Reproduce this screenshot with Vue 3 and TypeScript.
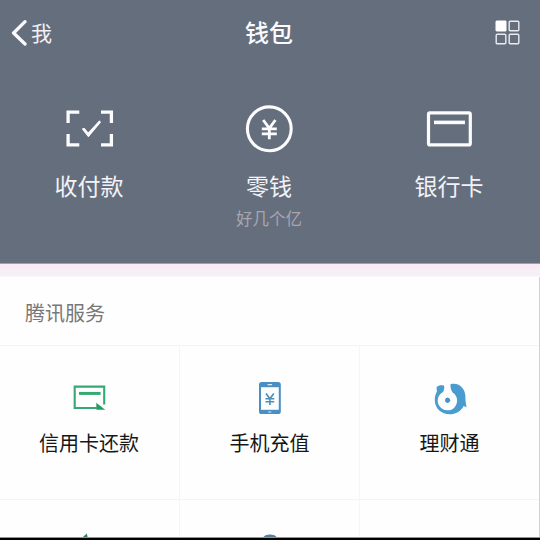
<script setup lang="ts">
interface Entry {
  id: string
  label: string
  note?: string
}

const actions: Entry[] = [
  { id: 'pay', label: '收付款' },
  { id: 'change', label: '零钱', note: '好几个亿' },
  { id: 'cards', label: '银行卡' },
]

const services: Entry[] = [
  { id: 'repay', label: '信用卡还款' },
  { id: 'topup', label: '手机充值' },
  { id: 'wealth', label: '理财通' },
]
</script>

<template>
  <main class="wallet">
    <section class="hero">
      <header class="nav">
        <div class="back">
          <svg width="16" height="28" viewBox="0 0 16 28" fill="none" stroke="#fafaff" stroke-width="3.3" stroke-linecap="round" stroke-linejoin="round">
            <path d="M14 2.7 2.6 14l11.4 11" />
          </svg>
          <span>我</span>
        </div>
        <h1>钱包</h1>
        <div class="menu">
          <svg width="26" height="26" viewBox="0 0 26 26" fill="none" stroke="#e9ebf0" stroke-width="1.4">
            <rect x="1.2" y="1.2" width="9.6" height="9.6" rx=".6" fill="#fff" stroke="#fff" />
            <rect x="14.2" y="1.2" width="9.6" height="9.6" rx="1" />
            <rect x="1.2" y="14.2" width="9.6" height="9.6" rx="1" />
            <rect x="14.2" y="14.2" width="9.6" height="9.6" rx="1" />
          </svg>
        </div>
      </header>
      <div class="actions">
        <div v-for="a in actions" :key="a.id" class="action">
          <svg width="50" height="50" viewBox="0 0 50 50" fill="none" stroke="#fcfcff">
            <template v-if="a.id === 'pay'">
              <path d="M4.1 19V8.2h11.2M37 8.2h10.4V19M4.1 30v10.8h11.2M37 40.8h10.4V30" stroke-width="3.3" />
              <path d="M18.5 25l1.6-.5 4.1 4.8L35.4 17.2l.9 1L24.4 32.4z" fill="#fcfcff" stroke-width="1.2" stroke-linejoin="round" />
            </template>
            <template v-else-if="a.id === 'change'">
              <circle cx="25.3" cy="24.8" r="21.9" stroke-width="3.1" />
              <path d="M19.2 16l6.1 8.4 6.1-8.4M25.3 24.3v10.9M17.8 24.8h15M17.8 29.8h15" stroke-width="2.8" />
            </template>
            <template v-else>
              <rect x="4.5" y="8.8" width="41.8" height="32.1" rx="1.5" stroke-width="3.2" />
              <path d="M10 18.4h31" stroke-width="3.6" />
            </template>
          </svg>
          <span class="action-label">{{ a.label }}</span>
          <span v-if="a.note" class="note">{{ a.note }}</span>
        </div>
      </div>
    </section>
    <div class="divider"></div>
    <section class="services">
      <h2>腾讯服务</h2>
      <div class="grid">
        <div v-for="s in services" :key="s.id" class="cell">
          <svg width="36" height="36" viewBox="0 0 36 36" fill="none">
            <template v-if="s.id === 'repay'">
              <path d="M32.2 24.5V6.6H2.7v21.4h22" stroke="#35a873" stroke-width="2.1" />
              <path d="M7 13.4h21.6" stroke="#35a873" stroke-width="3" />
              <path d="M24.3 22.8l8.9 7h-8.9z" fill="#269b64" />
            </template>
            <template v-else-if="s.id === 'topup'">
              <rect x="7" y="2" width="21.8" height="32" rx="2.6" fill="#498fc3" />
              <rect x="9" y="7.2" width="17.8" height="22.6" fill="#fbfdff" />
              <path d="M15.6 4.6h4.5M16.3 32h3" stroke="#dcecf7" stroke-width="1.2" />
              <path d="M14 13.5l3.9 5.3 3.9-5.3M17.9 18.3v6.8M13.5 18.8h8.8M13.5 21.8h8.8" stroke="#4f8eb6" stroke-width="1.6" />
            </template>
            <template v-else>
              <path d="M4.6 7.2C6.5 5.4 9 4.8 12 5.6c.6 2.4.2 4.4-1 6.4A9.7 9.7 0 1 0 20.6 12.4C18.9 10 18.4 7 18.5 4.2c2.5-.8 5.5-.6 7.5.4 5 2.4 7.6 7.4 7.4 12.9-.1 2.5.4 5.5 1.2 9.8L31.6 26C29 31.5 23.5 34.3 17.8 34.3 9.5 34.3 3 28.5 2.8 20.5 2.7 17 3.4 14 5 11.5 4.6 10 4.6 8.5 4.6 7.2z" fill="#499cd0" />
              <path d="M13 19.8l1-1.8 1.9-.4 1.9 1.1.5 1.9-1.2 1.8-2 .5-1.8-1.2z" fill="#4593c8" />
            </template>
          </svg>
          <span>{{ s.label }}</span>
        </div>
      </div>
      <div class="grid next">
        <div class="cell clipped">
          <svg width="36" height="4" viewBox="0 0 36 4"><path d="M11 4l3.8-3.6.8 3.6z" fill="#377c64" /></svg>
        </div>
        <div class="cell clipped">
          <svg width="36" height="4" viewBox="0 0 36 4"><path d="M11.5 4c2.7-3.2 10.3-3.2 13 0z" fill="#4f8399" /></svg>
        </div>
        <div class="cell clipped"></div>
      </div>
    </section>
    <div class="bottom"></div>
  </main>
</template>

<style scoped>
.wallet {
  display: flex;
  flex-direction: column;
  width: 540px;
  height: 540px;
  overflow: hidden;
  background: #fefefe;
  font-family: "Noto Sans CJK SC", sans-serif;
}
svg { display: block; flex: none; }
h1, h2 { margin: 0; }
.hero {
  height: 264px;
  flex: none;
  background: #656e7c;
  border-bottom: 1px solid #a39ca9;
  box-sizing: border-box;
}
.nav {
  display: grid;
  grid-template-columns: 1fr 180px 1fr;
  align-items: center;
  height: 65px;
}
.back {
  display: flex;
  align-items: center;
  gap: 4px;
  padding-left: 11px;
  color: #f0f0f5;
  font-size: 21px;
  line-height: 30px;
}
.back span { padding-bottom: 2px; }
h1 {
  text-align: center;
  color: #fafaff;
  font-size: 24px;
  font-weight: 500;
  line-height: 36px;
  padding: 0 2px 2px 0;
}
.menu {
  display: flex;
  justify-content: flex-end;
  padding-right: 19px;
}
.actions {
  display: grid;
  grid-template-columns: repeat(3, 180px);
  padding-top: 39px;
  margin-left: -1px;
}
.action {
  display: flex;
  flex-direction: column;
  align-items: center;
}
.action-label {
  margin-top: 15px;
  color: #f2f2f8;
  font-size: 23px;
  line-height: 32px;
}
.note {
  margin-top: 5px;
  color: #a9a5b0;
  font-size: 16.5px;
  line-height: 24px;
}
.divider {
  height: 13px;
  flex: none;
  background: linear-gradient(#faeaf6 0 5px, #f5eff6 5px 12px, #faf8fb 12px);
}
.services {
  height: 260px;
  flex: none;
  border-right: 1px solid #d2d2d2;
  overflow: hidden;
}
h2 {
  height: 68px;
  padding-left: 25px;
  border-bottom: 1px solid #f4f4f4;
  color: #77777a;
  font-size: 20px;
  font-weight: 400;
  line-height: 72px;
}
.grid {
  display: grid;
  grid-template-columns: 180px 180px 179px;
  height: 153px;
  border-bottom: 1px solid #f4f4f4;
}
.cell {
  display: flex;
  flex-direction: column;
  align-items: center;
  padding-top: 34px;
  border-right: 1px solid #f6f6f6;
  color: #171717;
  font-size: 20px;
  line-height: 30px;
}
.cell:first-child span { padding-right: 1px; }
.cell:last-child { border-right: 0; }
.cell span { margin-top: 12px; }
.next {
  height: 37px;
  border-bottom: 0;
}
.clipped { padding-top: 33px; }
.bottom {
  height: 3px;
  flex: none;
  box-sizing: border-box;
  border-top: 1px solid #929292;
  background: #000;
}
</style>
